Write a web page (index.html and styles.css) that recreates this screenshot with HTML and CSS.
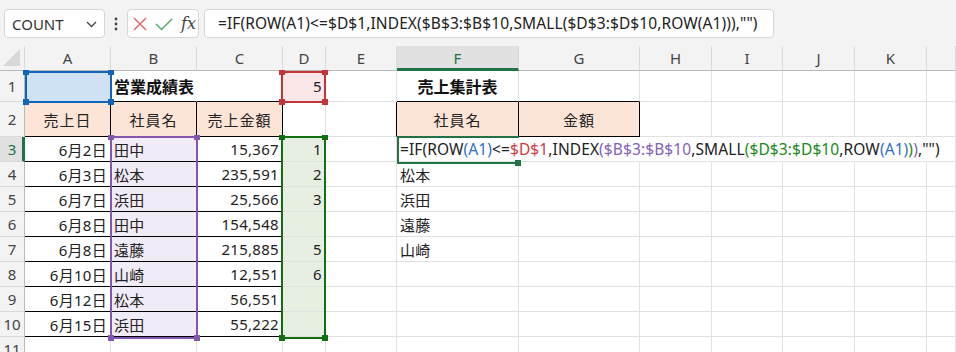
FILE: index.html
```html
<!DOCTYPE html>
<html lang="ja">
<head>
    <meta charset="UTF-8">
    <title>営業成績表</title>
    <link rel="stylesheet" href="styles.css">
</head>
<body>
    <div class="toolbar">
        <div class="namebox">
            <span>COUNT</span>
            <svg class="chev" width="11" height="7" viewBox="0 0 11 7"><polyline points="1,1 5.5,5.5 10,1" fill="none" stroke="#444" stroke-width="1.3"/></svg>
        </div>
        <div class="kebab">
            <svg width="4" height="14" viewBox="0 0 4 14"><circle cx="2" cy="2" r="1.4" fill="#444"/><circle cx="2" cy="7" r="1.4" fill="#444"/><circle cx="2" cy="12" r="1.4" fill="#444"/></svg>
        </div>
        <div class="fxbox">
            <svg width="16" height="16" viewBox="0 0 16 16"><path d="M2 2 L14 14 M14 2 L2 14" stroke="#e0696c" stroke-width="1.5" fill="none"/></svg>
            <svg width="18" height="16" viewBox="0 0 18 16"><polyline points="1,8 6.5,13.5 17,3" stroke="#5aa86a" stroke-width="1.5" fill="none"/></svg>
            <span class="fx">fx</span>
        </div>
        <div class="formula">=IF(ROW(A1)&lt;=$D$1,INDEX($B$3:$B$10,SMALL($D$3:$D$10,ROW(A1))),"")</div>
    </div>

    <div class="sheet">
        <!-- column headers -->
        <div class="hd corner"><span class="tri"></span></div>
        <div class="hd">A</div><div class="hd">B</div><div class="hd">C</div><div class="hd">D</div>
        <div class="hd">E</div><div class="hd sel-col">F</div><div class="hd">G</div><div class="hd">H</div>
        <div class="hd">I</div><div class="hd">J</div><div class="hd">K</div><div class="hd"></div>

        <!-- row 1 -->
        <div class="rh">1</div>
        <div class="c fill-blue"></div>
        <div class="c title nr bb">営業成績表</div>
        <div class="c bb"></div>
        <div class="c fill-red r">5</div>
        <div class="c"></div>
        <div class="c title ct bb">売上集計表</div>
        <div class="c bb"></div>
        <div class="c"></div><div class="c"></div><div class="c"></div><div class="c"></div><div class="c"></div>

        <!-- row 2 -->
        <div class="rh">2</div>
        <div class="c fill-peach ct br bb">売上日</div>
        <div class="c fill-peach ct br bb">社員名</div>
        <div class="c fill-peach ct br bb">売上金額</div>
        <div class="c"></div>
        <div class="c br"></div>
        <div class="c fill-peach ct br bb">社員名</div>
        <div class="c fill-peach ct br bb">金額</div>
        <div class="c"></div><div class="c"></div><div class="c"></div><div class="c"></div><div class="c"></div>

        <!-- row 3 -->
        <div class="rh sel-row">3</div>
        <div class="c r br bb">6月2日</div>
        <div class="c fill-purple br bb">田中</div>
        <div class="c r br bb">15,367</div>
        <div class="c fill-green r">1</div>
        <div class="c"></div>
        <div class="c edit"><span>=IF(ROW</span><span class="f-blue">(A1)</span><span>&lt;=</span><span class="f-red">$D$1</span><span>,INDEX</span><span class="f-purple">($B$3:$B$10</span><span>,SMALL</span><span class="f-green">($D$3:$D$10</span><span>,ROW</span><span class="f-blue">(A1)</span><span class="f-green">)</span><span class="f-purple">)</span><span>,"")</span></div>

        <!-- row 4 -->
        <div class="rh">4</div>
        <div class="c r br bb">6月3日</div>
        <div class="c fill-purple br bb">松本</div>
        <div class="c r br bb">235,591</div>
        <div class="c fill-green r">2</div>
        <div class="c"></div>
        <div class="c">松本</div>
        <div class="c"></div><div class="c"></div><div class="c"></div><div class="c"></div><div class="c"></div><div class="c"></div>

        <!-- row 5 -->
        <div class="rh">5</div>
        <div class="c r br bb">6月7日</div>
        <div class="c fill-purple br bb">浜田</div>
        <div class="c r br bb">25,566</div>
        <div class="c fill-green r">3</div>
        <div class="c"></div>
        <div class="c">浜田</div>
        <div class="c"></div><div class="c"></div><div class="c"></div><div class="c"></div><div class="c"></div><div class="c"></div>

        <!-- row 6 -->
        <div class="rh">6</div>
        <div class="c r br bb">6月8日</div>
        <div class="c fill-purple br bb">田中</div>
        <div class="c r br bb">154,548</div>
        <div class="c fill-green r"></div>
        <div class="c"></div>
        <div class="c">遠藤</div>
        <div class="c"></div><div class="c"></div><div class="c"></div><div class="c"></div><div class="c"></div><div class="c"></div>

        <!-- row 7 -->
        <div class="rh">7</div>
        <div class="c r br bb">6月8日</div>
        <div class="c fill-purple br bb">遠藤</div>
        <div class="c r br bb">215,885</div>
        <div class="c fill-green r">5</div>
        <div class="c"></div>
        <div class="c">山崎</div>
        <div class="c"></div><div class="c"></div><div class="c"></div><div class="c"></div><div class="c"></div><div class="c"></div>

        <!-- row 8 -->
        <div class="rh">8</div>
        <div class="c r br bb">6月10日</div>
        <div class="c fill-purple br bb">山崎</div>
        <div class="c r br bb">12,551</div>
        <div class="c fill-green r">6</div>
        <div class="c"></div><div class="c"></div>
        <div class="c"></div><div class="c"></div><div class="c"></div><div class="c"></div><div class="c"></div><div class="c"></div>

        <!-- row 9 -->
        <div class="rh">9</div>
        <div class="c r br bb">6月12日</div>
        <div class="c fill-purple br bb">松本</div>
        <div class="c r br bb">56,551</div>
        <div class="c fill-green r"></div>
        <div class="c"></div><div class="c"></div>
        <div class="c"></div><div class="c"></div><div class="c"></div><div class="c"></div><div class="c"></div><div class="c"></div>

        <!-- row 10 -->
        <div class="rh">10</div>
        <div class="c r br bb">6月15日</div>
        <div class="c fill-purple br bb">浜田</div>
        <div class="c r br bb">55,222</div>
        <div class="c fill-green r"></div>
        <div class="c"></div><div class="c"></div>
        <div class="c"></div><div class="c"></div><div class="c"></div><div class="c"></div><div class="c"></div><div class="c"></div>

        <!-- row 11 -->
        <div class="rh">11</div>
        <div class="c"></div><div class="c"></div><div class="c"></div><div class="c"></div><div class="c"></div><div class="c"></div>
        <div class="c"></div><div class="c"></div><div class="c"></div><div class="c"></div><div class="c"></div><div class="c"></div>

        <!-- reference highlights -->
        <div class="range range-blue"><i class="tl"></i><i class="tr"></i><i class="bl"></i><i class="brc"></i></div>
        <div class="range range-red"><i class="tl"></i><i class="tr"></i><i class="bl"></i><i class="brc"></i></div>
        <div class="range range-purple"><i class="tl"></i><i class="tr"></i><i class="bl"></i><i class="brc"></i></div>
        <div class="range range-green"><i class="tl"></i><i class="tr"></i><i class="bl"></i><i class="brc"></i></div>
        <div class="active"><i class="brc"></i></div>
    </div>
</body>
</html>
```

FILE: styles.css
```css
* {
    margin: 0;
    padding: 0;
    box-sizing: border-box;
}

body {
    width: 956px;
    height: 352px;
    overflow: hidden;
    background: #f3f3f3;
    font-family: 'Noto Sans', 'Noto Sans CJK JP', sans-serif;
    color: #222;
}

.toolbar {
    height: 46px;
    display: flex;
    align-items: flex-start;
    padding: 9px 0 0 4px;
}

.namebox {
    width: 101px;
    height: 29px;
    background: #fff;
    border: 1px solid #d6d6d6;
    border-radius: 4px;
    display: flex;
    align-items: center;
    justify-content: space-between;
    padding: 0 7px 0 7px;
    font-size: 15px;
    color: #333;
}

.chev {
    margin-top: 1px;
}

.kebab {
    width: 22px;
    height: 29px;
    display: flex;
    align-items: center;
    justify-content: center;
}

.fxbox {
    width: 72px;
    height: 29px;
    background: #fff;
    border: 1px solid #d6d6d6;
    border-radius: 4px;
    display: flex;
    align-items: center;
    gap: 7px;
    padding-left: 4px;
}

.fx {
    font-family: 'DejaVu Serif', serif;
    font-style: italic;
    font-size: 16px;
    color: #444;
    margin-left: 1px;
}

.formula {
    width: 570px;
    height: 29px;
    margin-left: 5px;
    background: #fff;
    border: 1px solid #d6d6d6;
    border-radius: 4px;
    padding-left: 13px;
    font-size: 15.5px;
    letter-spacing: 0.1px;
    line-height: 27px;
    white-space: nowrap;
    color: #222;
}

/* sheet grid */
.sheet {
    position: relative;
    display: grid;
    grid-template-columns: 25px 86px 86px 86px 43px 71px 122px 121px 72px 71px 72px 72px 29px;
    grid-template-rows: 25px 31px 35px repeat(9, 25px);
    background: #fff;
    font-size: 15px;
}

.hd {
    background: #f3f3f3;
    border-right: 1px solid #dadada;
    border-bottom: 1px solid #b9b9b9;
    color: #444;
    display: flex;
    align-items: center;
    justify-content: center;
}

.corner {
    position: relative;
}

.tri {
    position: absolute;
    right: 4px;
    bottom: 4px;
    width: 17px;
    height: 17px;
    background: #d8d8d8;
    clip-path: polygon(100% 0, 100% 100%, 0 100%);
}

.sel-col {
    background: #e1e1e1;
    color: #217346;
    border-bottom: 3px solid #217346;
    padding-top: 2px;
}

.rh {
    background: #f3f3f3;
    border-right: 1px solid #b9b9b9;
    border-bottom: 1px solid #dadada;
    color: #444;
    display: flex;
    align-items: center;
    justify-content: center;
}

.sel-row {
    background: #e1e1e1;
    color: #217346;
    border-right: 3px solid #217346;
    padding-left: 2px;
}

.c {
    border-right: 1px solid #e1e1e1;
    border-bottom: 1px solid #e1e1e1;
    padding: 0 3px;
    display: flex;
    align-items: center;
    white-space: nowrap;
    letter-spacing: 0.3px;
}

.r { justify-content: flex-end; }
.ct { justify-content: center; letter-spacing: 1px; }
.nr { border-right-color: #fff; }
.br { border-right-color: #000; }
.bb { border-bottom-color: #000; }

.title {
    font-weight: bold;
    font-size: 16px;
    letter-spacing: 0;
    color: #111;
}

.fill-blue { background: #cfe2f3; }
.fill-red { background: #fbe7e7; }
.fill-peach { background: #fce4d6; }
.fill-purple { background: #f1ebf7; }
.fill-green { background: #e6efe2; }

.edit {
    grid-column: span 7;
    letter-spacing: 0.1px;
    font-size: 15.5px;
}

.f-blue { color: #2f6fc4; }
.f-red { color: #d03a3f; }
.f-purple { color: #8660b8; }
.f-green { color: #178a17; }

/* formula reference boxes */
.range {
    position: absolute;
    border: 2px solid;
}

.range i, .active i {
    position: absolute;
    width: 6px;
    height: 6px;
    background: inherit;
}

.range .tl { left: -4px; top: -3px; height: 5px; }
.range .tr { right: -4px; top: -3px; height: 5px; }
.range .bl { left: -4px; bottom: -4px; }
.range .brc { right: -4px; bottom: -4px; }

.range-blue { left: 25px; top: 25px; width: 87px; height: 32px; border-color: #1065b8; }
.range-blue i { background: #1065b8; }

.range-red { left: 281px; top: 25px; width: 45px; height: 32px; border-color: #c4353a; }
.range-red i { background: #c4353a; }

.range-purple { left: 110px; top: 90px; width: 88px; height: 203px; border-color: #8357b0; }
.range-purple i { background: #8357b0; }

.range-green { left: 281px; top: 90px; width: 45px; height: 203px; border-color: #127012; }
.range-green i { background: #127012; }

.active {
    position: absolute;
    left: 397px;
    top: 90px;
    width: 122px;
    height: 28px;
    border: 2px solid #217346;
    border-right: none;
}

.active .brc {
    right: -2px;
    bottom: -4px;
    background: #217346;
}
```
